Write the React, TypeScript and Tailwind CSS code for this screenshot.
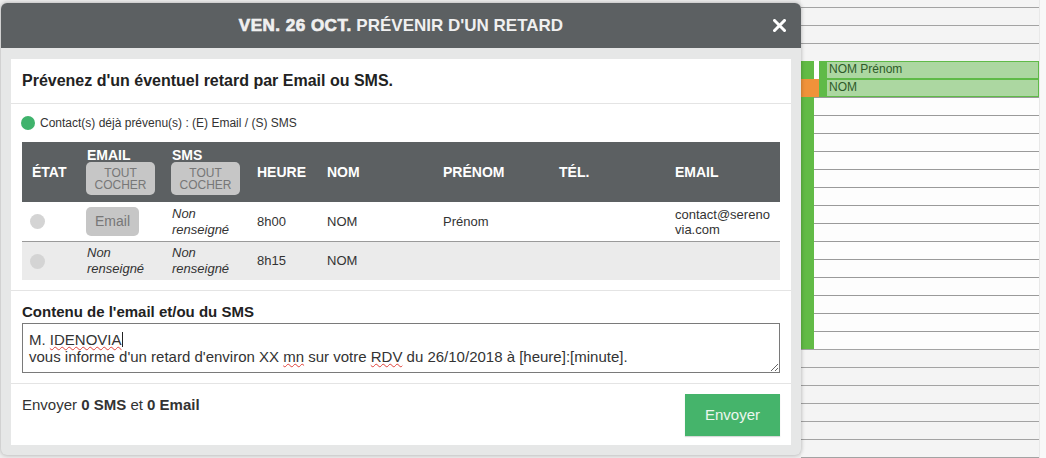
import * as React from "react";

type CalRow = "off" | "on" | "event1" | "event2";

const calRows: CalRow[] = [
  "off", "off", "off",
  "event1", "event2",
  "on", "on", "on", "on", "on", "on", "on", "on", "on", "on", "on", "on", "on", "on",
  "off", "off", "off", "off", "off", "off", "off",
];

function CheckAllButton() {
  return (
    <div className="w-[69px] h-[33px] rounded-[5px] bg-[#c6c6c6] flex flex-col items-center justify-center text-[12px] leading-[12px] font-normal text-[#777]">
      <span>TOUT</span>
      <span>COCHER</span>
    </div>
  );
}

function StateDot() {
  return <span className="block w-[15px] h-[15px] rounded-full bg-[#d4d4d4] ml-[8px]" />;
}

function NotFilled() {
  return (
    <span className="italic leading-[16px] text-[#333]">
      Non
      <br />
      renseigné
    </span>
  );
}

const cols = "grid grid-cols-[64px_85px_85px_70px_116px_116px_116px_1fr]";

function ContactTable() {
  return (
    <div className="mx-[11px] text-[13px] text-[#333]">
      <div className={`${cols} h-[60px] bg-[#5c6062] text-white font-bold text-[14px]`}>
        <div className="flex items-center pl-[10px]">ÉTAT</div>
        <div className="flex flex-col pt-[6px]">
          <span className="leading-[14px] pl-[1px]">EMAIL</span>
          <CheckAllButton />
        </div>
        <div className="flex flex-col pt-[6px]">
          <span className="leading-[14px] pl-[1px]">SMS</span>
          <CheckAllButton />
        </div>
        <div className="flex items-center pl-[1px]">HEURE</div>
        <div className="flex items-center pl-[1px]">NOM</div>
        <div className="flex items-center pl-[1px]">PRÉNOM</div>
        <div className="flex items-center pl-[1px]">TÉL.</div>
        <div className="flex items-center pl-[1px]">EMAIL</div>
      </div>

      <div className={`${cols} h-[40px] bg-white border-b border-[#9a9a9a]`}>
        <div className="flex items-center">
          <StateDot />
        </div>
        <div className="flex items-center">
          <span className="w-[53px] h-[29px] rounded-[5px] bg-[#c6c6c6] text-[#777] text-[14px] flex items-center justify-center">
            Email
          </span>
        </div>
        <div className="flex items-center pl-[1px]">
          <NotFilled />
        </div>
        <div className="flex items-center pl-[1px]">8h00</div>
        <div className="flex items-center pl-[1px]">NOM</div>
        <div className="flex items-center pl-[1px]">Prénom</div>
        <div className="flex items-center pl-[1px]" />
        <div className="flex items-center pl-[1px]">
          <span className="w-[96px] break-all leading-[15px]">contact@serenovia.com</span>
        </div>
      </div>

      <div className={`${cols} h-[38px] bg-[#ebebeb]`}>
        <div className="flex items-center">
          <StateDot />
        </div>
        <div className="flex items-center pl-[1px]">
          <NotFilled />
        </div>
        <div className="flex items-center pl-[1px]">
          <NotFilled />
        </div>
        <div className="flex items-center pl-[1px]">8h15</div>
        <div className="flex items-center pl-[1px]">NOM</div>
        <div />
        <div />
        <div />
      </div>
    </div>
  );
}

function Spell({ children }: { children: React.ReactNode }) {
  return (
    <span className="underline decoration-wavy decoration-[#e0413a] decoration-[1px] underline-offset-[1px]">
      {children}
    </span>
  );
}

function DelayModal() {
  return (
    <div className="relative z-10 ml-[1px] mt-[3px] w-[800px] h-[452px] shrink-0 rounded-[6px] bg-[#e6e7e7] shadow-[0_0_4px_rgba(0,0,0,0.3)] flex flex-col">
      <div className="h-[45px] shrink-0 rounded-t-[6px] bg-[#5c6062] grid grid-cols-[1fr_auto_1fr] items-center">
        <div />
        <h1 className="text-[17px] font-bold text-[#f0f0f0] leading-none">
          <span className="tracking-[0.5px] [-webkit-text-stroke:0.7px_#f0f0f0]">VEN. 26 OCT.</span> PRÉVENIR D'UN RETARD
        </h1>
        <div className="flex justify-end pr-[15px]">
          <svg width="13" height="13" viewBox="0 0 13 13">
            <path d="M1.5 1.5 L11.5 11.5 M11.5 1.5 L1.5 11.5" stroke="#ffffff" strokeWidth="3" strokeLinecap="square" />
          </svg>
        </div>
      </div>

      <div className="p-[10px] pt-[11px]">
        <div className="bg-white h-[386px] flex flex-col">
          <div className="h-[45px] shrink-0 border-b border-[#e4e4e4] flex items-center px-[11px]">
            <h2 className="text-[16px] font-bold text-[#222]">Prévenez d'un éventuel retard par Email ou SMS.</h2>
          </div>

          <div className="h-[38px] shrink-0 flex items-center gap-[5px] px-[10px] text-[12px] text-[#333]">
            <span className="w-[14px] h-[14px] rounded-full bg-[#3fb36c]" />
            <span>Contact(s) déjà prévenu(s) : (E) Email / (S) SMS</span>
          </div>

          <ContactTable />

          <div className="h-[11px] shrink-0 border-b border-[#e4e4e4]" />

          <div className="h-[93px] shrink-0 border-b border-[#e4e4e4] px-[11px] pt-[13px]">
            <div className="text-[15px] font-bold text-[#222] leading-[16px]">Contenu de l'email et/ou du SMS</div>
            <div className="mt-[3px] h-[50px] border border-[#7a7a7a] px-[6px] pt-[7px] text-[15px] leading-[17px] text-[#333] resize-y overflow-auto">
              M. <Spell>IDENOVIA</Spell>
              <span className="inline-block w-px h-[15px] bg-[#222] align-[-2px]" />
              <br />
              vous informe d'un retard d'environ XX <Spell>mn</Spell> sur votre <Spell>RDV</Spell> du 26/10/2018 à [heure]:[minute].
            </div>
          </div>

          <div className="flex justify-between items-start px-[11px] pt-[10px]">
            <p className="mt-[1px] text-[15px] leading-[20px] text-[#333]">
              Envoyer <b>0 SMS</b> et <b>0 Email</b>
            </p>
            <button className="w-[95px] h-[42px] bg-[#45b46b] text-[15px] text-[#ecf7ef] shadow-[0_1px_1px_rgba(0,0,0,0.15)]">
              Envoyer
            </button>
          </div>
        </div>
      </div>
    </div>
  );
}

function CalendarRow({ kind }: { kind: CalRow }) {
  if (kind === "off") {
    return <div className="h-[18px] shrink-0 border-t border-[#a3a3a3] bg-[#f4f4f4]" />;
  }
  if (kind === "on") {
    return (
      <div className="h-[18px] shrink-0 flex bg-[#fdfdfd]">
        <div className="w-[13px] bg-[#62bb46]" />
        <div className="flex-1 border-t border-[#9a9a9a]" />
      </div>
    );
  }
  const event = (label: string) => (
    <div className="flex-1 flex border border-[#5fba48] bg-[#acd7a1]">
      <div className="w-[7px] bg-[#5fba48]" />
      <span className="pl-[2px] text-[12px] leading-[15px] text-[#2e5b29]">{label}</span>
    </div>
  );
  if (kind === "event1") {
    return (
      <div className="h-[18px] shrink-0 flex bg-[#fdfdfd]">
        <div className="w-[13px] bg-[#62bb46]" />
        <div className="w-[5px] bg-white" />
        {event("NOM Prénom")}
      </div>
    );
  }
  return (
    <div className="h-[18px] shrink-0 flex bg-[#fdfdfd]">
      <div className="w-[18px] bg-[#f0923a]" />
      {event("NOM")}
    </div>
  );
}

function Calendar() {
  return (
    <div className="flex-1 flex overflow-hidden">
      <div className="w-[238px] flex flex-col bg-[#f4f4f4]">
        <div className="h-[7px] shrink-0" />
        {calRows.map((kind, i) => (
          <CalendarRow key={i} kind={kind} />
        ))}
      </div>
      <div className="flex-1 bg-[#f8f8f8] border-l border-[#e8e8e8]" />
    </div>
  );
}

export default function App() {
  return (
    <div className="w-[1046px] h-[458px] overflow-hidden flex bg-[#eeeeee] font-['Liberation_Sans',Arial,sans-serif]">
      <DelayModal />
      <Calendar />
    </div>
  );
}
